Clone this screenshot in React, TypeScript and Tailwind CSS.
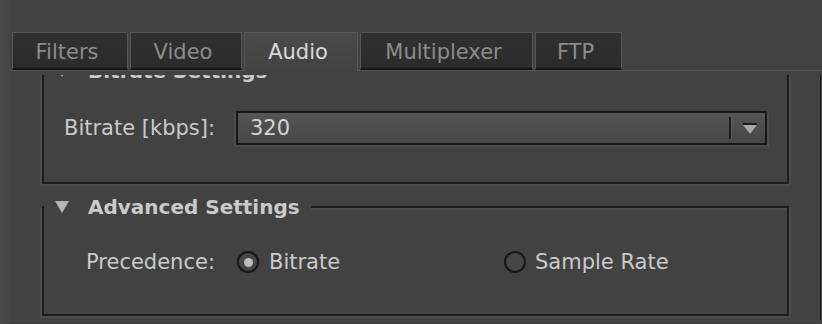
import React from "react";

const tabs = [
  { label: "Filters", cls: "w-[116px]", active: false },
  { label: "Video", cls: "w-[112px]", active: false },
  { label: "Audio", cls: "w-[114px]", active: true },
  { label: "Multiplexer", cls: "w-[173px]", active: false },
  { label: "FTP", cls: "w-[87px]", active: false },
];

function Tri() {
  return (
    <svg width="14" height="12" viewBox="0 0 14 12" className="shrink-0">
      <polygon points="0,0 14,0 7,12" fill="#b4b4b4" />
    </svg>
  );
}

function Radio({ checked }: { checked: boolean }) {
  return (
    <span className="w-[22px] h-[22px] rounded-full border-2 border-[#161616] bg-[#464646] flex items-center justify-center shrink-0">
      {checked && <span className="w-[9px] h-[9px] rounded-full bg-[#bdbdbd]" />}
    </span>
  );
}

export default function App() {
  return (
    <div className="w-[822px] h-[324px] overflow-hidden bg-[#424242] flex font-['DejaVu_Sans',sans-serif] text-[21px] leading-[24px]">
      <div className="w-[10px] shrink-0 bg-gradient-to-r from-[#4b4b4b] to-[#444444]" />
      <div className="flex-1 flex flex-col">
        <div className="pt-[32px] pl-[2px] flex gap-[2px] h-[70px] items-start">
          {tabs.map((t) =>
            t.active ? (
              <div
                key={t.label}
                className={`${t.cls} h-[39px] relative z-10 border-t border-x border-[#575757] bg-gradient-to-b from-[#4a4a4a] to-[#424242] text-[#dadada] flex justify-center pt-[7px] pr-[6px]`}
              >
                {t.label}
              </div>
            ) : (
              <div
                key={t.label}
                className={`${t.cls} h-[38px] border-t border-x border-[#575757] border-b-2 border-b-[#141414] bg-gradient-to-b from-[#313131] to-[#2b2b2b] text-[#8c8c8c] flex justify-center pt-[7px] pr-[6px]`}
              >
                {t.label}
              </div>
            )
          )}
        </div>
        <div className="border-t border-[#575757] pt-[4px]">
          <div className="h-[246px] overflow-hidden border-r border-[#1e1e1e] border-b border-b-[#4a4a4a] w-[811px]">
            <div className="ml-[32px] w-[747px] -mt-[16px]">
              <fieldset className="border-2 border-[#1c1c1c] shadow-[-2px_2px_0_#4c4c4c,2px_2px_0_#4c4c4c,inset_0_2px_0_#4c4c4c]">
                <legend className="flex items-center bg-[#424242] pl-[11px] pr-[11px] text-[#cacaca] font-bold text-[20px]">
                  <Tri />
                  <span className="ml-[19px]">Bitrate Settings</span>
                </legend>
                <div className="pt-[28px] pb-[37px] pl-[20px] flex items-center">
                  <div className="w-[172px] text-[#cacaca]">Bitrate [kbps]:</div>
                  <div className="w-[531px] h-[34px] border-2 border-[#171717] bg-gradient-to-b from-[#555555] to-[#474747] shadow-[-2px_2px_0_#4e4e4e,2px_2px_0_#4e4e4e] flex items-center">
                    <span className="flex-1 pl-[12px] text-[#d4d4d4]">320</span>
                    <span className="w-[3px] h-[22px] bg-[#1c1c1c] border-r border-[#5c5c5c]" />
                    <svg width="14" height="11" viewBox="0 0 14 11" className="ml-[11px] mr-[8px]">
                      <rect x="0" y="0" width="14" height="2" fill="#1b1b1b" />
                      <polygon points="0,2 14,2 7,11" fill="#a8a8a8" />
                    </svg>
                  </div>
                </div>
              </fieldset>
              <fieldset className="mt-[11px] border-2 border-[#1c1c1c] shadow-[-2px_2px_0_#4c4c4c,2px_2px_0_#4c4c4c,inset_0_2px_0_#4c4c4c]">
                <legend className="flex items-center bg-[#424242] pl-[11px] pr-[11px] text-[#cacaca] font-bold text-[20px]">
                  <Tri />
                  <span className="ml-[19px]">Advanced Settings</span>
                </legend>
                <div className="pt-[31px] pb-[40px] pl-[42px] flex items-center">
                  <div className="w-[151px] text-[#cacaca]">Precedence:</div>
                  <div className="w-[267px] flex items-center gap-[10px]">
                    <Radio checked />
                    <span className="text-[#cacaca]">Bitrate</span>
                  </div>
                  <div className="flex items-center gap-[9px]">
                    <Radio checked={false} />
                    <span className="text-[#cacaca]">Sample Rate</span>
                  </div>
                </div>
              </fieldset>
            </div>
          </div>
        </div>
      </div>
    </div>
  );
}
